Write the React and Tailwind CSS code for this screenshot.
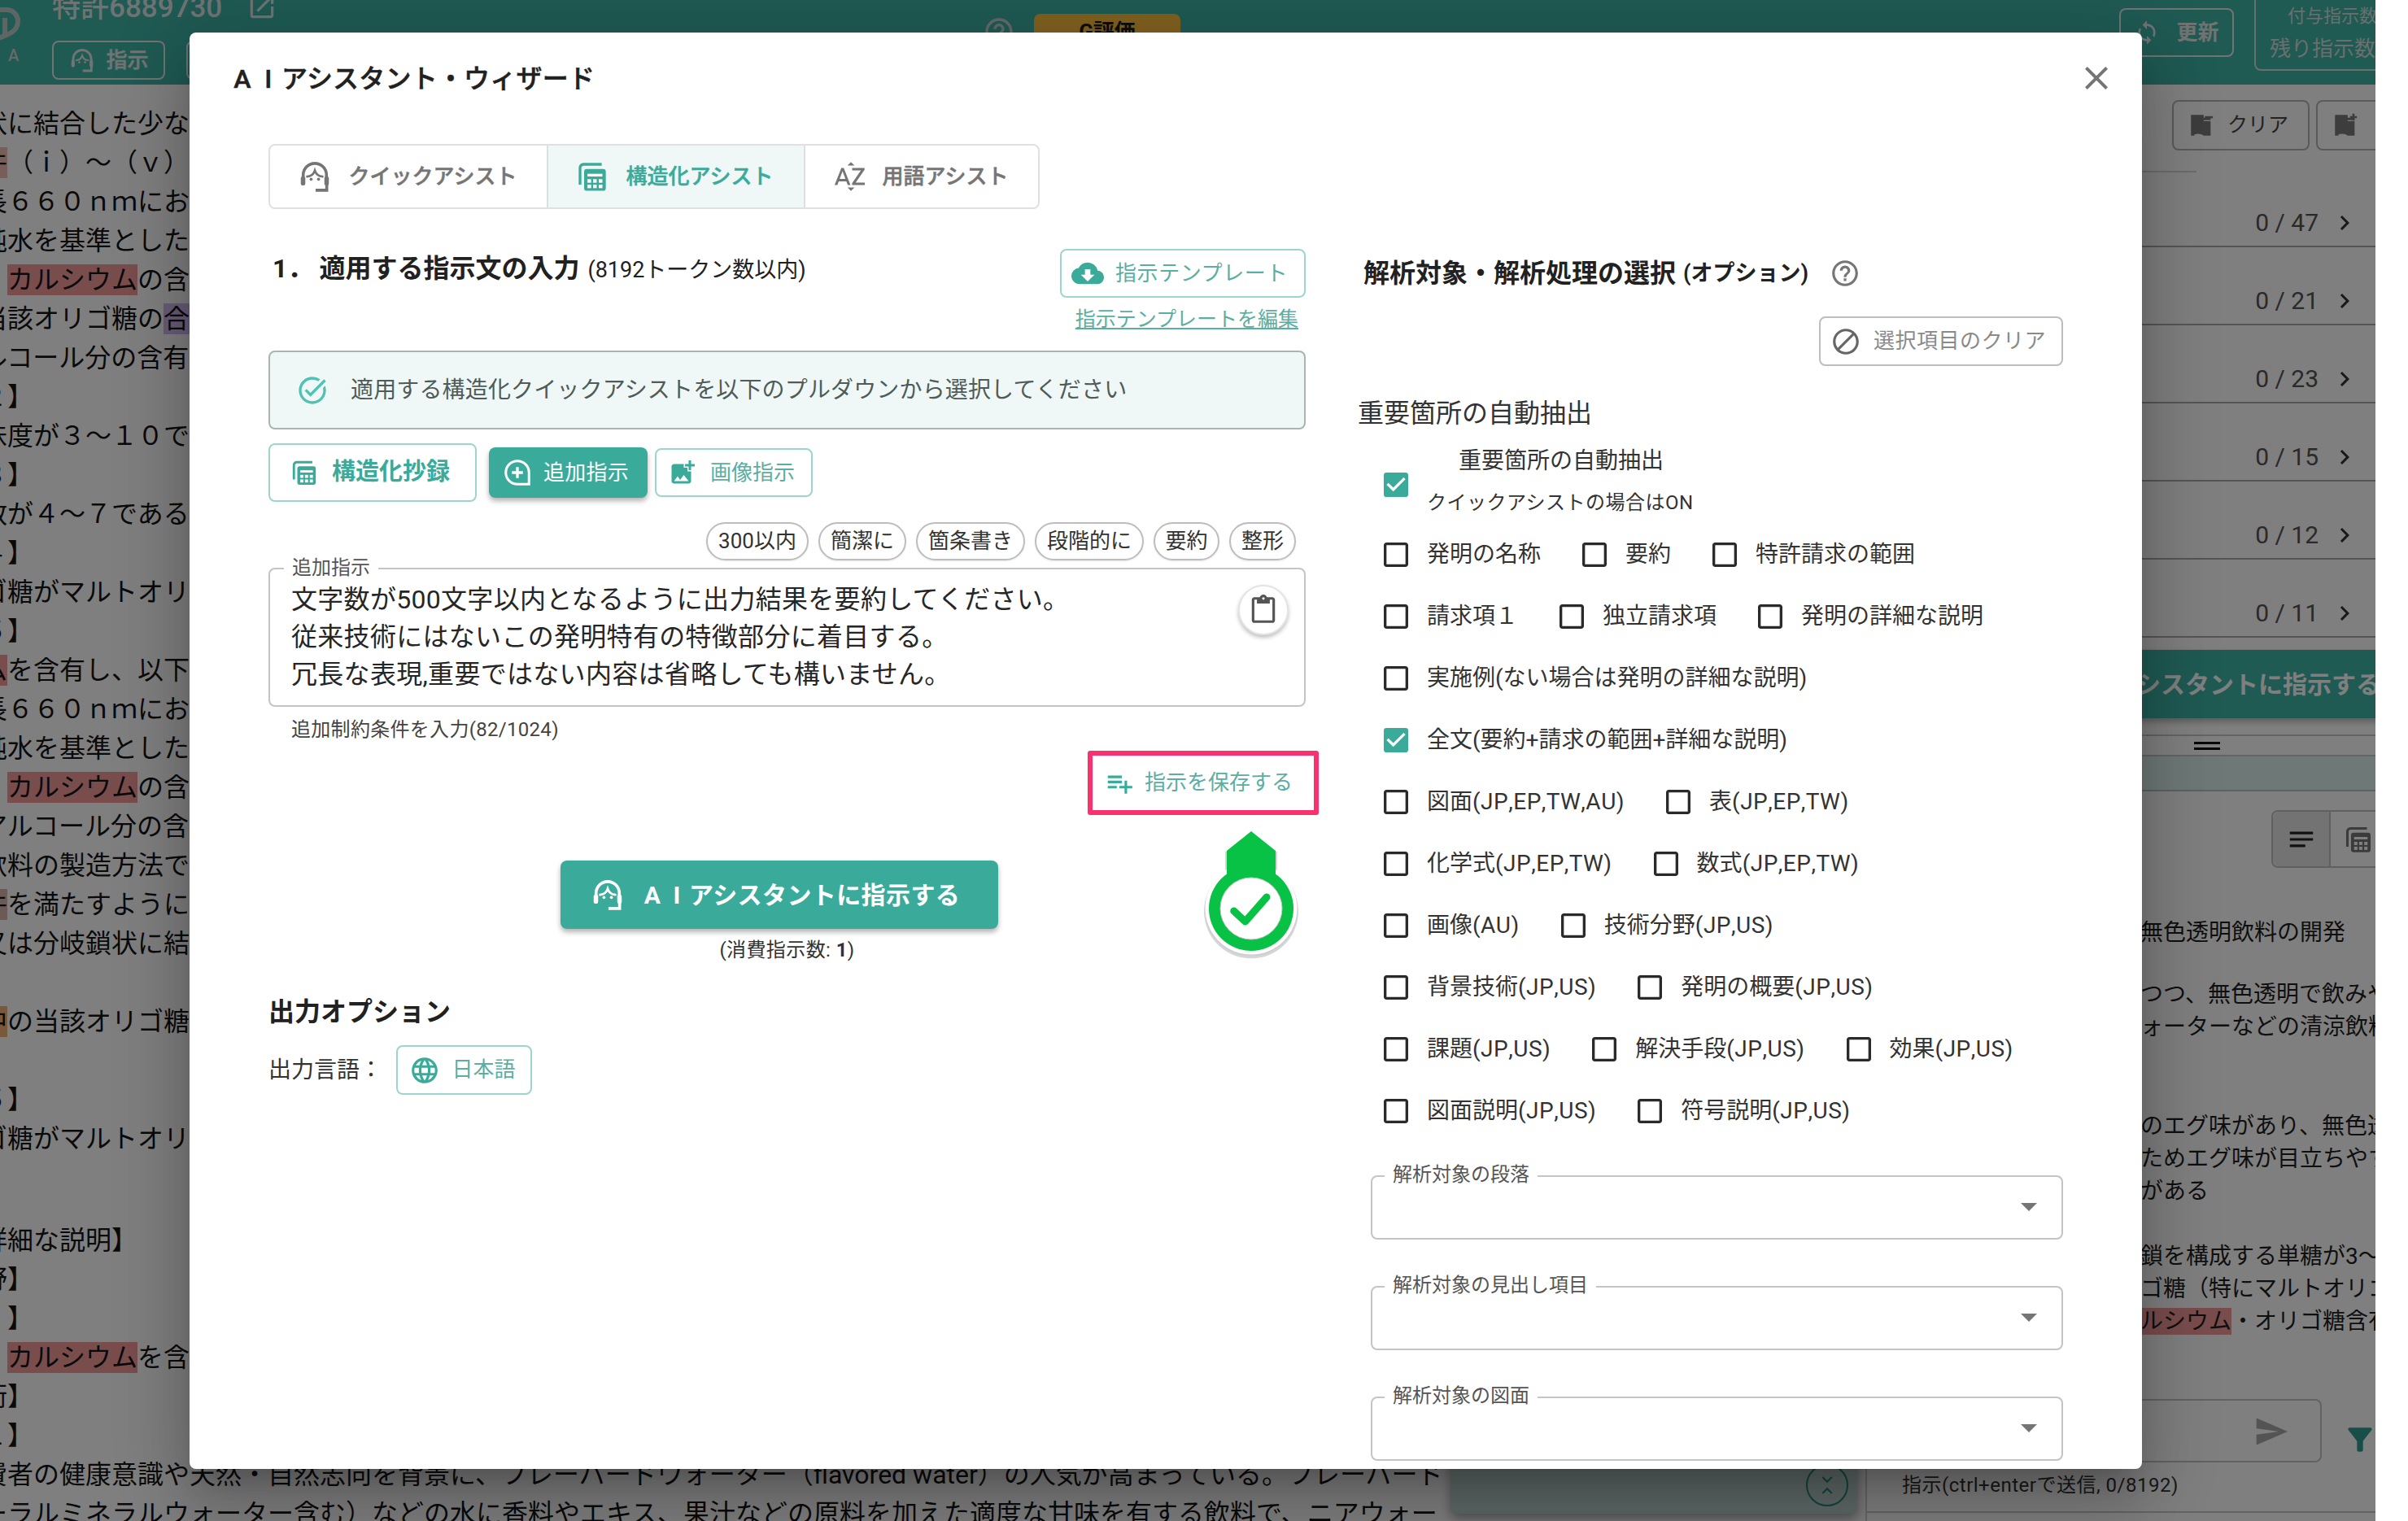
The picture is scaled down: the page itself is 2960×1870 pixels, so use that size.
import React from 'react';
import {
  MdCheckBox, MdCheckBoxOutlineBlank, MdClose, MdCloudDownload, MdLanguage, MdPlaylistAdd,
  MdOutlineContentPaste, MdHelpOutline, MdBlock, MdOutlineTaskAlt, MdAddPhotoAlternate,
  MdSortByAlpha, MdChevronRight, MdSend, MdFilterAlt, MdNotes, MdArrowDropDown, MdSync,
  MdOpenInNew, MdKeyboardArrowDown, MdKeyboardArrowUp,
} from 'react-icons/md';

const Agent = ({ size = 40, className = '' }) => (
  <svg width={size} height={size} viewBox="0 0 24 24" fill="none" className={className}>
    <path d="M4.2 13V11a7.8 7.8 0 0 1 15.6 0v2" stroke="currentColor" strokeWidth="2" />
    <rect x="2.6" y="12" width="3" height="6" rx="1.2" fill="currentColor" />
    <rect x="18.4" y="12" width="3" height="6" rx="1.2" fill="currentColor" />
    <path d="M20 17v4.2h-7.5" stroke="currentColor" strokeWidth="2" />
    <path d="M6.2 12c3 .2 5-1.6 5.8-4 .8 2.400 2.800 4.200 5.800 4" stroke="currentColor" strokeWidth="1.500" />
    <circle cx="9.500" cy="13.800" r="1" fill="currentColor" />
    <circle cx="14.500" cy="13.800" r="1" fill="currentColor" />
  </svg>
);

const TableCopy = ({ size = 40, className = '' }) => (
  <svg width={size} height={size} viewBox="0 0 24 24" fill="none" className={className}>
    <path d="M19 3H5.500A2.500 2.500 0 0 0 3 5.500V18" stroke="currentColor" strokeWidth="2" />
    <rect x="6" y="6.500" width="16" height="16" rx="2" fill="currentColor" />
    <rect x="8.500" y="10" width="11" height="2" fill="white" />
    <rect x="8.500" y="14" width="2.700" height="2.600" fill="white" />
    <rect x="12.600" y="14" width="2.700" height="2.600" fill="white" />
    <rect x="16.800" y="14" width="2.700" height="2.600" fill="white" />
    <rect x="8.500" y="18" width="2.700" height="2.600" fill="white" />
    <rect x="12.600" y="18" width="2.700" height="2.600" fill="white" />
    <rect x="16.800" y="18" width="2.700" height="2.600" fill="white" />
  </svg>
);

const AddBubble = ({ size = 40 }) => (
  <svg width={size} height={size} viewBox="0 0 24 24" fill="none">
    <path d="M12 2.500a9.500 9.500 0 0 1 9.500 9.500v9.500H12a9.500 9.500 0 0 1 0-19z" stroke="currentColor" strokeWidth="2" />
    <path d="M12 7.500v9M7.500 12h9" stroke="currentColor" strokeWidth="2.200" />
  </svg>
);

const FlagMark = ({ plus }) => (
  <svg width="34" height="34" viewBox="0 0 24 24" className="shrink-0 text-[#7a7a7a]">
    <path d="M3 3h11v2.500h6v2h-6v1h6V21h-6c-2-1.500-5-2-8-1v1H3z" fill="currentColor" />
    {plus ? <path d="M19 2v6M16 5h6" stroke="currentColor" strokeWidth="1.800" /> : <path d="M15 5h7" stroke="currentColor" strokeWidth="1.800" />}
  </svg>
);

const AI = () => (
  <>
    <span className="inline-block w-[1em] text-center">A</span>
    <span className="inline-block w-[1em] text-center">I</span>
  </>
);

const Hl = ({ c, children }) => <span className={c}>{children}</span>;
const RED = 'bg-[#f59a9a]';

const leftLines = [
  <>状に結合した少な</>,
  <><Hl c="bg-[#f0bdb0]">件</Hl>（ｉ）～（ｖ）</>,
  <>長６６０ｎｍにお</>,
  <>純水を基準とした</>,
  <>、<Hl c={RED}>カルシウム</Hl>の含有</>,
  <>当該オリゴ糖の<Hl c="bg-[#d3b8f0]">合有</Hl></>,
  <>ルコール分の含有</>,
  <>２】</>,
  <>味度が３～１０で</>,
  <>３】</>,
  <>数が４～７である</>,
  <>４】</>,
  <>ゴ糖がマルトオリ</>,
  <>５】</>,
  <><Hl c={RED}>ム</Hl>を含有し、以下</>,
  <>長６６０ｎｍにお</>,
  <>純水を基準とした</>,
  <>、<Hl c={RED}>カルシウム</Hl>の含有</>,
  <>アルコール分の含有</>,
  <>飲料の製造方法で</>,
  <><Hl c="bg-[#d6b4ac]">件</Hl>を満たすように</>,
  <>又は分岐鎖状に結</>,
  <>&nbsp;</>,
  <><Hl c="bg-[#f5b078]">中</Hl>の当該オリゴ糖</>,
  <>&nbsp;</>,
  <>５】</>,
  <>ゴ糖がマルトオリ</>,
];

const leftLines2 = [
  <>詳細な説明】</>,
  <>野】</>,
  <>　】</>,
  <>、<Hl c={RED}>カルシウム</Hl>を含有</>,
  <>術】</>,
  <>１】</>,
  <>費者の健康意識や天然・自然志向を背景に、フレーバードウォーター（flavored water）の人気が高まっている。フレーバード</>,
  <>ーラルミネラルウォーター含む）などの水に香料やエキス、果汁などの原料を加えた適度な甘味を有する飲料で、ニアウォー</>,
];

const counts = ['0 / 47', '0 / 21', '0 / 23', '0 / 15', '0 / 12', '0 / 11'];

const rows = [
  [['発明の名称'], ['要約'], ['特許請求の範囲']],
  [['請求項１'], ['独立請求項'], ['発明の詳細な説明']],
  [['実施例(ない場合は発明の詳細な説明)']],
  [['全文(要約+請求の範囲+詳細な説明)', true]],
  [['図面', '(JP,EP,TW,AU)'], ['表', '(JP,EP,TW)']],
  [['化学式', '(JP,EP,TW)'], ['数式', '(JP,EP,TW)']],
  [['画像', '(AU)'], ['技術分野', '(JP,US)']],
  [['背景技術', '(JP,US)'], ['発明の概要', '(JP,US)']],
  [['課題', '(JP,US)'], ['解決手段', '(JP,US)'], ['効果', '(JP,US)']],
  [['図面説明', '(JP,US)'], ['符号説明', '(JP,US)']],
];

const chips = ['300以内', '簡潔に', '箇条書き', '段階的に', '要約', '整形'];
const chipW = ['w-[126px]', 'w-[108px]', 'w-[134px]', 'w-[134px]', 'w-[81px]', 'w-[82px]'];

const SelectField = ({ label }) => (
  <div className="relative h-[79px] rounded-lg border-2 border-[#c4c4c4] flex items-center justify-end pr-[16px] pb-[4px]">
    <span className="absolute left-[15px] -top-[19px] h-[32px] bg-white px-[10px] text-[24px] leading-[32px] text-[#555]">{label}</span>
    <MdArrowDropDown size={48} className="text-[#757575]" />
  </div>
);

function Background() {
  return (
    <div className="w-[2920px] h-[1870px] overflow-hidden bg-white text-[#1a1a1a]">
      <header className="h-[104px] bg-[#3eb4a6] flex overflow-hidden text-white relative">
        <div className="w-[64px] shrink-0 relative">
          <svg width="30" height="60" viewBox="0 0 30 60" fill="none" className="text-[#b9cfcb]">
            <path d="M-6 12h14a14 14 0 0 1 14 14c0 12-10 16-24 21" stroke="currentColor" strokeWidth="6" />
            <path d="M6 22v22" stroke="currentColor" strokeWidth="6" />
          </svg>
          <span className="block -mt-[4px] ml-[10px] text-[20px] leading-[24px] font-medium text-[#c8d8d5]">A</span>
        </div>
        <div className="flex flex-col w-[1144px] shrink-0 -mt-[14px]">
          <div className="flex items-center h-[48px] gap-[30px] text-[35px] font-medium">
            <span className="text-[#dfe7e6]">特許6889730</span>
            <MdOpenInNew size={38} className="text-[#dfe7e6] -mt-[4px]" />
          </div>
          <div className="flex gap-[26px] mt-[16px]">
            <div className="w-[139px] h-[48px] rounded-lg border-2 border-[#e0e8e6] flex items-center justify-center gap-[12px] text-[26px] font-medium text-[#e0e8e6] [-webkit-text-stroke:0.5px_currentColor]">
              <Agent size={34} />指示
            </div>
            <div className="w-[120px] h-[48px] rounded-lg border-2 border-[#e0e8e6]" />
          </div>
        </div>
        <MdHelpOutline size={40} className="mt-[19px] shrink-0 text-[#c7d3d1]" />
        <div className="ml-[23px] mt-[17px] h-[60px] w-[180px] shrink-0 rounded-lg bg-[#ffc03e] text-[#1a1a1a] text-[26px] font-bold text-center leading-[44px]">G評価</div>
        <div className="ml-[1154px] mt-[10px] h-[60px] w-[141px] shrink-0 rounded-lg border-2 border-[#e0e8e6] flex items-center justify-center gap-[20px] text-[26px] font-bold text-[#e0e8e6]">
          <MdSync size={32} />更新
        </div>
        <div className="ml-[25px] -mt-[2px] h-[89px] w-[200px] shrink-0 rounded-bl-lg border-2 border-[#d5dedc] text-[#d5dedc] whitespace-nowrap">
          <div className="pl-[39px] text-[22px] leading-[40px]">付与指示数:</div>
          <div className="pl-[17px] text-[26px] leading-[40px]">残り指示数:</div>
        </div>
      </header>

      <div className="flex h-[1766px]">
        <div className="relative w-[2293px] shrink-0 overflow-hidden">
          <div className="-ml-[23px] pt-[24px] text-[32px] leading-[48px] whitespace-nowrap text-[#151515]">
            {leftLines.map((l, i) => <div key={i} className="h-[48px]">{l}</div>)}
            <div className="mt-[77px]">
              {leftLines2.map((l, i) => <div key={i} className="h-[48px]">{l}</div>)}
            </div>
          </div>
          <div className="absolute left-[1783px] top-[1500px] w-[500px] h-[257px] rounded-lg bg-[#bcd2ce] shadow-[0_6px_14px_rgba(0,0,0,0.35)] flex items-end justify-end pr-[11px] pb-[9px]">
            <div className="w-[52px] h-[52px] rounded-full border-2 border-[#2d8a7e] flex flex-col items-center justify-center text-[#2d8a7e]">
              <MdKeyboardArrowDown size={26} className="-mb-[6px]" />
              <MdKeyboardArrowUp size={26} className="-mt-[6px]" />
            </div>
          </div>
        </div>

        <div className="flex-1 min-w-0 overflow-hidden border-l-2 border-[#cfcfcf] text-[#1f1f1f]">
          <div className="h-[106px] pt-[19px] pl-[375px] flex gap-[8px]">
            <div className="w-[169px] h-[62px] shrink-0 rounded-lg border-2 border-[#b5b5b5] flex items-center pl-[17px] gap-[15px] text-[25px] text-[#444]">
              <FlagMark />クリア
            </div>
            <div className="w-[120px] h-[62px] shrink-0 rounded-lg border-2 border-[#b5b5b5] pl-[17px] flex items-center">
              <FlagMark plus />
            </div>
          </div>
          <div className="w-[405px] border-t-2 border-[#d8d8d8]" />
          {counts.map((c, i) => (
            <div key={c} className={`${i === 0 ? 'h-[92px]' : 'h-[96px]'} border-b-2 border-[#aaaaaa] flex items-end justify-end pb-[10px] pr-[20px] gap-[14px] text-[30px] leading-[36px] text-[#555]`}>
              <span>{c}</span><MdChevronRight size={36} className="text-[#333]" />
            </div>
          ))}
          <div className="mt-[15px] h-[84px] bg-[#3eb4a6] shadow-[0_4px_8px_rgba(0,0,0,0.3)] flex items-center justify-end -mr-[6px] text-[30px] font-bold text-white whitespace-nowrap">
            <AI />アシスタントに指示する
          </div>
          <div className="mt-[20px] h-[27px] border-y-2 border-[#c8c8c8] flex flex-col justify-center pl-[402px] gap-[4px]">
            <div className="w-[32px] h-[3px] bg-[#111]" />
            <div className="w-[32px] h-[3px] bg-[#111]" />
          </div>
          <div className="h-[43px] bg-[#dcf2ee] border-b-2 border-[#b9c4c2]" />
          <div className="mt-[23px] ml-[497px] h-[71px] w-[200px] rounded-lg border-2 border-[#c0c0c0] flex">
            <div className="w-[71px] bg-[#e6e6e6] rounded-l-lg border-r-2 border-[#c0c0c0] flex items-center justify-center shrink-0">
              <MdNotes size={38} className="text-[#222]" />
            </div>
            <div className="pl-[16px] flex items-center"><TableCopy size={36} className="text-[#777]" /></div>
          </div>
          <div className="pl-[336px] text-[28px] leading-[40px] whitespace-nowrap">
            <div className="mt-[60px]">無色透明飲料の開発</div>
            <div className="mt-[36px]">つつ、無色透明で飲みや</div>
            <div>ォーターなどの清涼飲料</div>
            <div className="mt-[82px]">のエグ味があり、無色透</div>
            <div>ためエグ味が目立ちやす</div>
            <div>がある</div>
            <div className="mt-[40px]">鎖を構成する単糖が3～</div>
            <div>ゴ糖（特にマルトオリゴ</div>
            <div><span className={RED}>ルシウム</span>・オリゴ糖含有</div>
          </div>
          <div className="mt-[75px] flex items-start">
            <div className="w-[559px] h-[78px] rounded-lg border-2 border-[#c4c4c4] flex items-center justify-end pr-[38px] shrink-0">
              <MdSend size={44} className="text-[#a8a8a8] mt-[2px]" />
            </div>
            <MdFilterAlt size={44} className="ml-[25px] mt-[28px] shrink-0 text-[#2f9c8e]" />
          </div>
          <div className="ml-[43px] text-[24px] leading-[36px] mt-[10px] text-[#333] tracking-[0.5px]">指示(ctrl+enterで送信, 0/8192)</div>
          <div className="mt-[14px] border-t-2 border-[#c8c8c8]" />
        </div>
      </div>
    </div>
  );
}

function Pin() {
  return (
    <svg width="120" height="160" viewBox="-3 -2 120 160" fill="none" className="absolute left-[1148px] top-[714px]">
      <path d="M25 25 V50 A58 58 0 1 0 89 50 V25" fill="#d6d6d6" />
      <circle cx="57" cy="96.500" r="57" fill="#cfcfcf" />
      <circle cx="57" cy="95" r="56.500" fill="#ffffff" />
      <path d="M57 0 L87 24 V53 H27 V24 Z" fill="#07c244" />
      <circle cx="57" cy="95" r="52" fill="#07c244" />
      <circle cx="57" cy="95" r="38" fill="#ffffff" stroke="#c8c8c8" strokeWidth="1" />
      <path d="M35.700 98 L49.700 111 L76 81" stroke="#07c244" strokeWidth="9" strokeLinecap="round" strokeLinejoin="round" />
    </svg>
  );
}

function LeftColumn() {
  return (
    <div className="relative w-[1275px] shrink-0">
      <div className="flex items-start justify-between h-[60px]">
        <h2 className="ml-[5px] text-[32px] leading-[48px] font-bold text-[#212121] whitespace-nowrap">
          <span className="mr-[7px]">1．</span>適用する指示文の入力
          <span className="ml-[10px] text-[27px] font-normal">(8192トークン数以内)</span>
        </h2>
        <div className="w-[302px] h-[60px] rounded-lg border-2 border-[#9dd5cd] flex items-center pl-[12px] gap-[14px] text-[26px] tracking-[0.6px] text-[#5aaea2]">
          <MdCloudDownload size={40} className="text-[#3aab9b]" />指示テンプレート
        </div>
      </div>
      <div className="mt-[9px] h-[36px] pr-[9px] text-right text-[25px] leading-[36px] underline text-[#5aaea2]">指示テンプレートを編集</div>
      <div className="mt-[20px] h-[97px] rounded-lg border-2 border-[#a9b5b3] bg-[#f0f8f7] flex items-center pl-[32px] gap-[27px] text-[28px] tracking-[0.15px] text-[#4f5b59]">
        <MdOutlineTaskAlt size={40} className="text-[#4fc2b3]" />
        適用する構造化クイックアシストを以下のプルダウンから選択してください
      </div>
      <div className="mt-[17px] flex items-center">
        <div className="w-[256px] h-[72px] rounded-lg border-2 border-[#9dd5cd] flex items-center pl-[25px] gap-[17px] text-[29px] font-bold text-[#3aab9b]">
          <TableCopy size={34} />構造化抄録
        </div>
        <div className="ml-[15px] w-[195px] h-[62px] rounded-lg bg-[#3aab9b] shadow-[0_4px_6px_rgba(0,0,0,0.3)] flex items-center justify-center gap-[14px] pr-[6px] text-[26px] tracking-[0.3px] text-white">
          <AddBubble size={36} />追加指示
        </div>
        <div className="ml-[9px] w-[194px] h-[60px] rounded-lg border-2 border-[#9dd5cd] flex items-center justify-center gap-[16px] pr-[6px] text-[26px] text-[#5aaea2]">
          <MdAddPhotoAlternate size={36} className="text-[#3aab9b]" />画像指示
        </div>
      </div>
      <div className="mt-[25px] flex justify-end gap-[12px] pr-[12px]">
        {chips.map((c, i) => (
          <div key={c} className={`${chipW[i]} h-[47px] rounded-full border-2 border-[#bdbdbd] flex items-center justify-center text-[26px] text-[#333] shadow-[0_1px_2px_rgba(0,0,0,0.1)]`}>{c}</div>
        ))}
      </div>
      <div className="relative mt-[9px] h-[171px] rounded-lg border-2 border-[#c4c4c4] pl-[26px] pt-[14px] text-[32px] leading-[46px] tracking-[0.3px] text-[#262626]">
        <span className="absolute left-[17px] -top-[18px] h-[32px] bg-white px-[10px] text-[24px] leading-[32px] tracking-normal text-[#555]">追加指示</span>
        <div>文字数が500文字以内となるように出力結果を要約してください。</div>
        <div>従来技術にはないこの発明特有の特徴部分に着目する。</div>
        <div>冗長な表現,重要ではない内容は省略しても構いません。</div>
        <div className="absolute right-[19px] top-[19px] w-[62px] h-[62px] rounded-full bg-white border-2 border-[#e4e4e4] shadow-[0_3px_5px_rgba(0,0,0,0.25)] flex items-center justify-center">
          <MdOutlineContentPaste size={38} className="text-[#555]" />
        </div>
      </div>
      <div className="ml-[28px] mt-[10px] h-[36px] text-[24px] leading-[36px] tracking-[0.3px] text-[#444]">追加制約条件を入力(82/1024)</div>
      <div className="mt-[8px] ml-[1007px] w-[284px] h-[79px] rounded-[3px] border-[6px] border-[#f9326f] flex items-center pl-[14px] gap-[12px] text-[26px] text-[#5aaea2] whitespace-nowrap">
        <MdPlaylistAdd size={38} className="text-[#3aab9b]" />指示を保存する
      </div>
      <Pin />
      <div className="mt-[56px] ml-[359px] w-[538px] h-[84px] rounded-lg bg-[#3aab9b] shadow-[0_4px_6px_rgba(0,0,0,0.3)] flex items-center pl-[36px] gap-[18px] text-[30px] tracking-[0.4px] font-bold text-white whitespace-nowrap">
        <Agent size={44} /><span><AI />アシスタントに指示する</span>
      </div>
      <div className="mt-[8px] h-[36px] text-center text-[24px] leading-[36px] tracking-[0.4px] text-[#333]">(消費指示数: <b>1</b>)</div>
      <h3 className="mt-[34px] text-[32px] leading-[48px] font-bold text-[#212121]">出力オプション</h3>
      <div className="mt-[17px] flex items-center text-[28px] text-[#333]">
        <span className="w-[157px]">出力言語：</span>
        <div className="w-[167px] h-[61px] rounded-lg border-2 border-[#9dd5cd] flex items-center justify-center gap-[14px] pr-[4px] text-[26px] text-[#5aaea2]">
          <MdLanguage size={38} className="text-[#3aab9b]" />日本語
        </div>
      </div>
    </div>
  );
}

function RightColumn() {
  return (
    <div className="w-[867px] shrink-0">
      <div className="mt-[6px] pl-[7px] flex items-center h-[48px] text-[#212121] whitespace-nowrap">
        <span className="text-[32px] font-bold">解析対象・解析処理の選択</span>
        <span className="ml-[9px] text-[27px] font-bold">(オプション)</span>
        <MdHelpOutline size={38} className="ml-[26px] text-[#757575]" />
      </div>
      <div className="mt-[29px] flex justify-end">
        <div className="w-[300px] h-[61px] rounded-lg border-2 border-[#bdbdbd] flex items-center pl-[12px] gap-[15px] text-[26px] tracking-[0.5px] text-[#8a8a8a]">
          <MdBlock size={38} className="text-[#666]" />選択項目のクリア
        </div>
      </div>
      <div className="mt-[34px] h-[48px] text-[32px] leading-[48px] text-[#333]">重要箇所の自動抽出</div>
      <div className="mt-[8px] h-[104px] pl-[27px] flex">
        <MdCheckBox size={40} className="shrink-0 mt-[36px] text-[#3aab9b]" />
        <div className="ml-[18px] pt-[7px]">
          <div className="pl-[39px] text-[28px] leading-[40px] text-[#333]">重要箇所の自動抽出</div>
          <div className="mt-[13px] text-[24px] leading-[36px] tracking-[0.5px] text-[#333]">クイックアシストの場合はON</div>
        </div>
      </div>
      {rows.map((r, i) => (
        <div key={i} className="h-[76px] pl-[27px] flex items-center text-[28px] text-[#333] whitespace-nowrap">
          {r.map((item) => {
            const on = i === 3;
            return (
              <div key={item[0]} className="flex items-center gap-[18px] mr-[46px]">
                {on
                  ? <MdCheckBox size={40} className="shrink-0 text-[#3aab9b]" />
                  : <MdCheckBoxOutlineBlank size={40} className="shrink-0 text-[#2a2a2a]" />}
                <span>{item[0]}{item[1] ? <span className="tracking-[0.5px] [font-kerning:none]">{item[1]}</span> : null}</span>
              </div>
            );
          })}
        </div>
      ))}
      <div className="mt-[41px] ml-[16px] flex flex-col gap-[57px]">
        <SelectField label="解析対象の段落" />
        <SelectField label="解析対象の見出し項目" />
        <SelectField label="解析対象の図面" />
      </div>
    </div>
  );
}

export default function App() {
  return (
    <div className="relative w-[2960px] h-[1870px] overflow-hidden bg-white font-[Roboto,'Noto_Sans_CJK_JP',sans-serif]">
      <Background />
      <div className="absolute left-0 top-0 w-[2920px] h-[1870px] bg-black/50 overflow-hidden">
        <div className="absolute left-[233px] top-[40px] w-[2400px] h-[1766px] rounded-lg bg-white overflow-hidden shadow-[0_22px_30px_-14px_rgba(0,0,0,0.2),0_48px_76px_6px_rgba(0,0,0,0.14),0_18px_92px_16px_rgba(0,0,0,0.12)]">
          <div className="h-[112px] pl-[49px] pr-[32px] flex items-center justify-between">
            <h1 className="pt-[2px] text-[32px] font-medium tracking-[0.2px] text-[#212121] whitespace-nowrap [-webkit-text-stroke:0.5px_currentColor]"><AI />アシスタント・ウィザード</h1>
            <MdClose size={48} className="text-[#757575]" />
          </div>
          <div className="pl-[97px]">
            <div className="mt-[25px] w-[948px] h-[80px] rounded-lg border-2 border-[#e0e0e0] flex text-[26px] font-medium text-[#757575] [-webkit-text-stroke:0.5px_currentColor]">
              <div className="w-[340px] flex items-center justify-center gap-[20px] pr-[4px]">
                <Agent size={44} />クイックアシスト
              </div>
              <div className="w-[318px] bg-[#f0f8f7] border-x-2 border-[#d9e0df] flex items-center justify-center gap-[22px] pr-[4px] text-[#3aab9b]">
                <TableCopy size={40} />構造化アシスト
              </div>
              <div className="flex-1 flex items-center justify-center gap-[18px] pr-[4px]">
                <MdSortByAlpha size={44} />用語アシスト
              </div>
            </div>
            <div className="mt-[49px] flex gap-[64px]">
              <LeftColumn />
              <RightColumn />
            </div>
          </div>
        </div>
      </div>
    </div>
  );
}
